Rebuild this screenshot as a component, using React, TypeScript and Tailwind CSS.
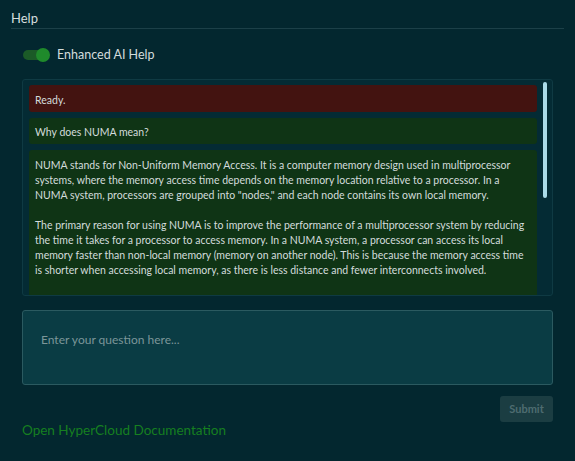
import React, { useState } from 'react';

type Message = {
  id: number;
  kind: 'status' | 'question' | 'answer';
  text: string;
};

const messages: Message[] = [
  { id: 1, kind: 'status', text: 'Ready.' },
  { id: 2, kind: 'question', text: 'Why does NUMA mean?' },
  {
    id: 3,
    kind: 'answer',
    text:
      'NUMA stands for Non-Uniform Memory Access. It is a computer memory design used in multiprocessor systems, where the memory access time depends on the memory location relative to a processor. In a NUMA system, processors are grouped into "nodes," and each node contains its own local memory.\n\n' +
      'The primary reason for using NUMA is to improve the performance of a multiprocessor system by reducing the time it takes for a processor to access memory. In a NUMA system, a processor can access its local memory faster than non-local memory (memory on another node). This is because the memory access time is shorter when accessing local memory, as there is less distance and fewer interconnects involved.\n\n' +
      'NUMA also helps the system scale. As more processors are added, a single shared memory bus becomes a bottleneck, while NUMA lets each node serve most of its own memory requests.',
  },
];

const bubbleStyles: Record<Message['kind'], string> = {
  status: 'bg-[#431310] pt-[8px] pb-[4px]',
  question: 'bg-[#0f3415] pt-[7px] pb-[4px]',
  answer: 'bg-[#0f3415] pt-[8px] pb-[10px] whitespace-pre-wrap',
};

export default function App() {
  const [enhanced, setEnhanced] = useState(true);
  const [question, setQuestion] = useState('');

  return (
    <div className="min-h-[461px] w-full bg-[#03272f] px-[11px] pt-[10px] text-[#d3dcdc] font-['Lato',sans-serif]">
      {/* Section title */}
      <div className="border-b border-[#1c4048] pb-[2px] text-[13px] leading-[16px] text-[#d6dede]">Help</div>

      <div className="px-[11px]">
        {/* Enhanced AI toggle */}
        <button
          type="button"
          onClick={() => setEnhanced(!enhanced)}
          className="mt-[17px] flex items-center gap-[6px]"
        >
          <span className="relative flex h-[14px] w-[28px] items-center">
            <span className={`ml-[1px] h-[10px] w-[26px] rounded-full ${enhanced ? 'bg-[#1b5a27]' : 'bg-[#33494d]'}`} />
            <span
              className={`absolute top-0 h-[14px] w-[14px] rounded-full ${enhanced ? 'left-[14px] bg-[#1f8a2b]' : 'left-0 bg-[#7a8a8c]'}`}
            />
          </span>
          <span className="ml-[1px] text-[12.5px] text-[#d3dcdc]">Enhanced AI Help</span>
        </button>

        {/* Conversation */}
        <div className="relative mt-[14px] h-[217px] rounded-[3px] border border-[#0f3a43] bg-[#042b34]">
          <div className="flex h-full flex-col gap-[6px] overflow-hidden pt-[5px] pl-[6px] pr-[15px]">
            {messages.map((m) => (
              <div
                key={m.id}
                className={`shrink-0 rounded-[3px] px-[6px] text-[10.5px] leading-[15px] text-[#d3dcdc] ${bubbleStyles[m.kind]}`}
              >
                {m.text}
              </div>
            ))}
          </div>
          {/* scroll thumb */}
          <div className="absolute right-[5px] top-[2px] h-[116px] w-[4px] rounded-full bg-[#aadbe8]" />
        </div>

        {/* Question input */}
        <textarea
          value={question}
          onChange={(e) => setQuestion(e.target.value)}
          placeholder="Enter your question here..."
          className="mt-[14px] block h-[75px] w-full resize-none rounded-[3px] border border-[#2b5a60] bg-[#0a3c44] px-[18px] pt-[21px] text-[12px] leading-[16px] text-[#d3dcdc] outline-none placeholder:text-[#7c9699]"
        />

        <div className="mt-[11px] flex justify-end">
          <button
            type="button"
            disabled={!question}
            className="h-[26px] w-[53px] rounded-[3px] bg-[#1b3d42] text-[11px] font-bold text-[#4e6c70]"
          >
            Submit
          </button>
        </div>

        <a href="#" className="block text-[13.5px] leading-[16px] text-[#167f20]">
          Open HyperCloud Documentation
        </a>
      </div>
    </div>
  );
}
